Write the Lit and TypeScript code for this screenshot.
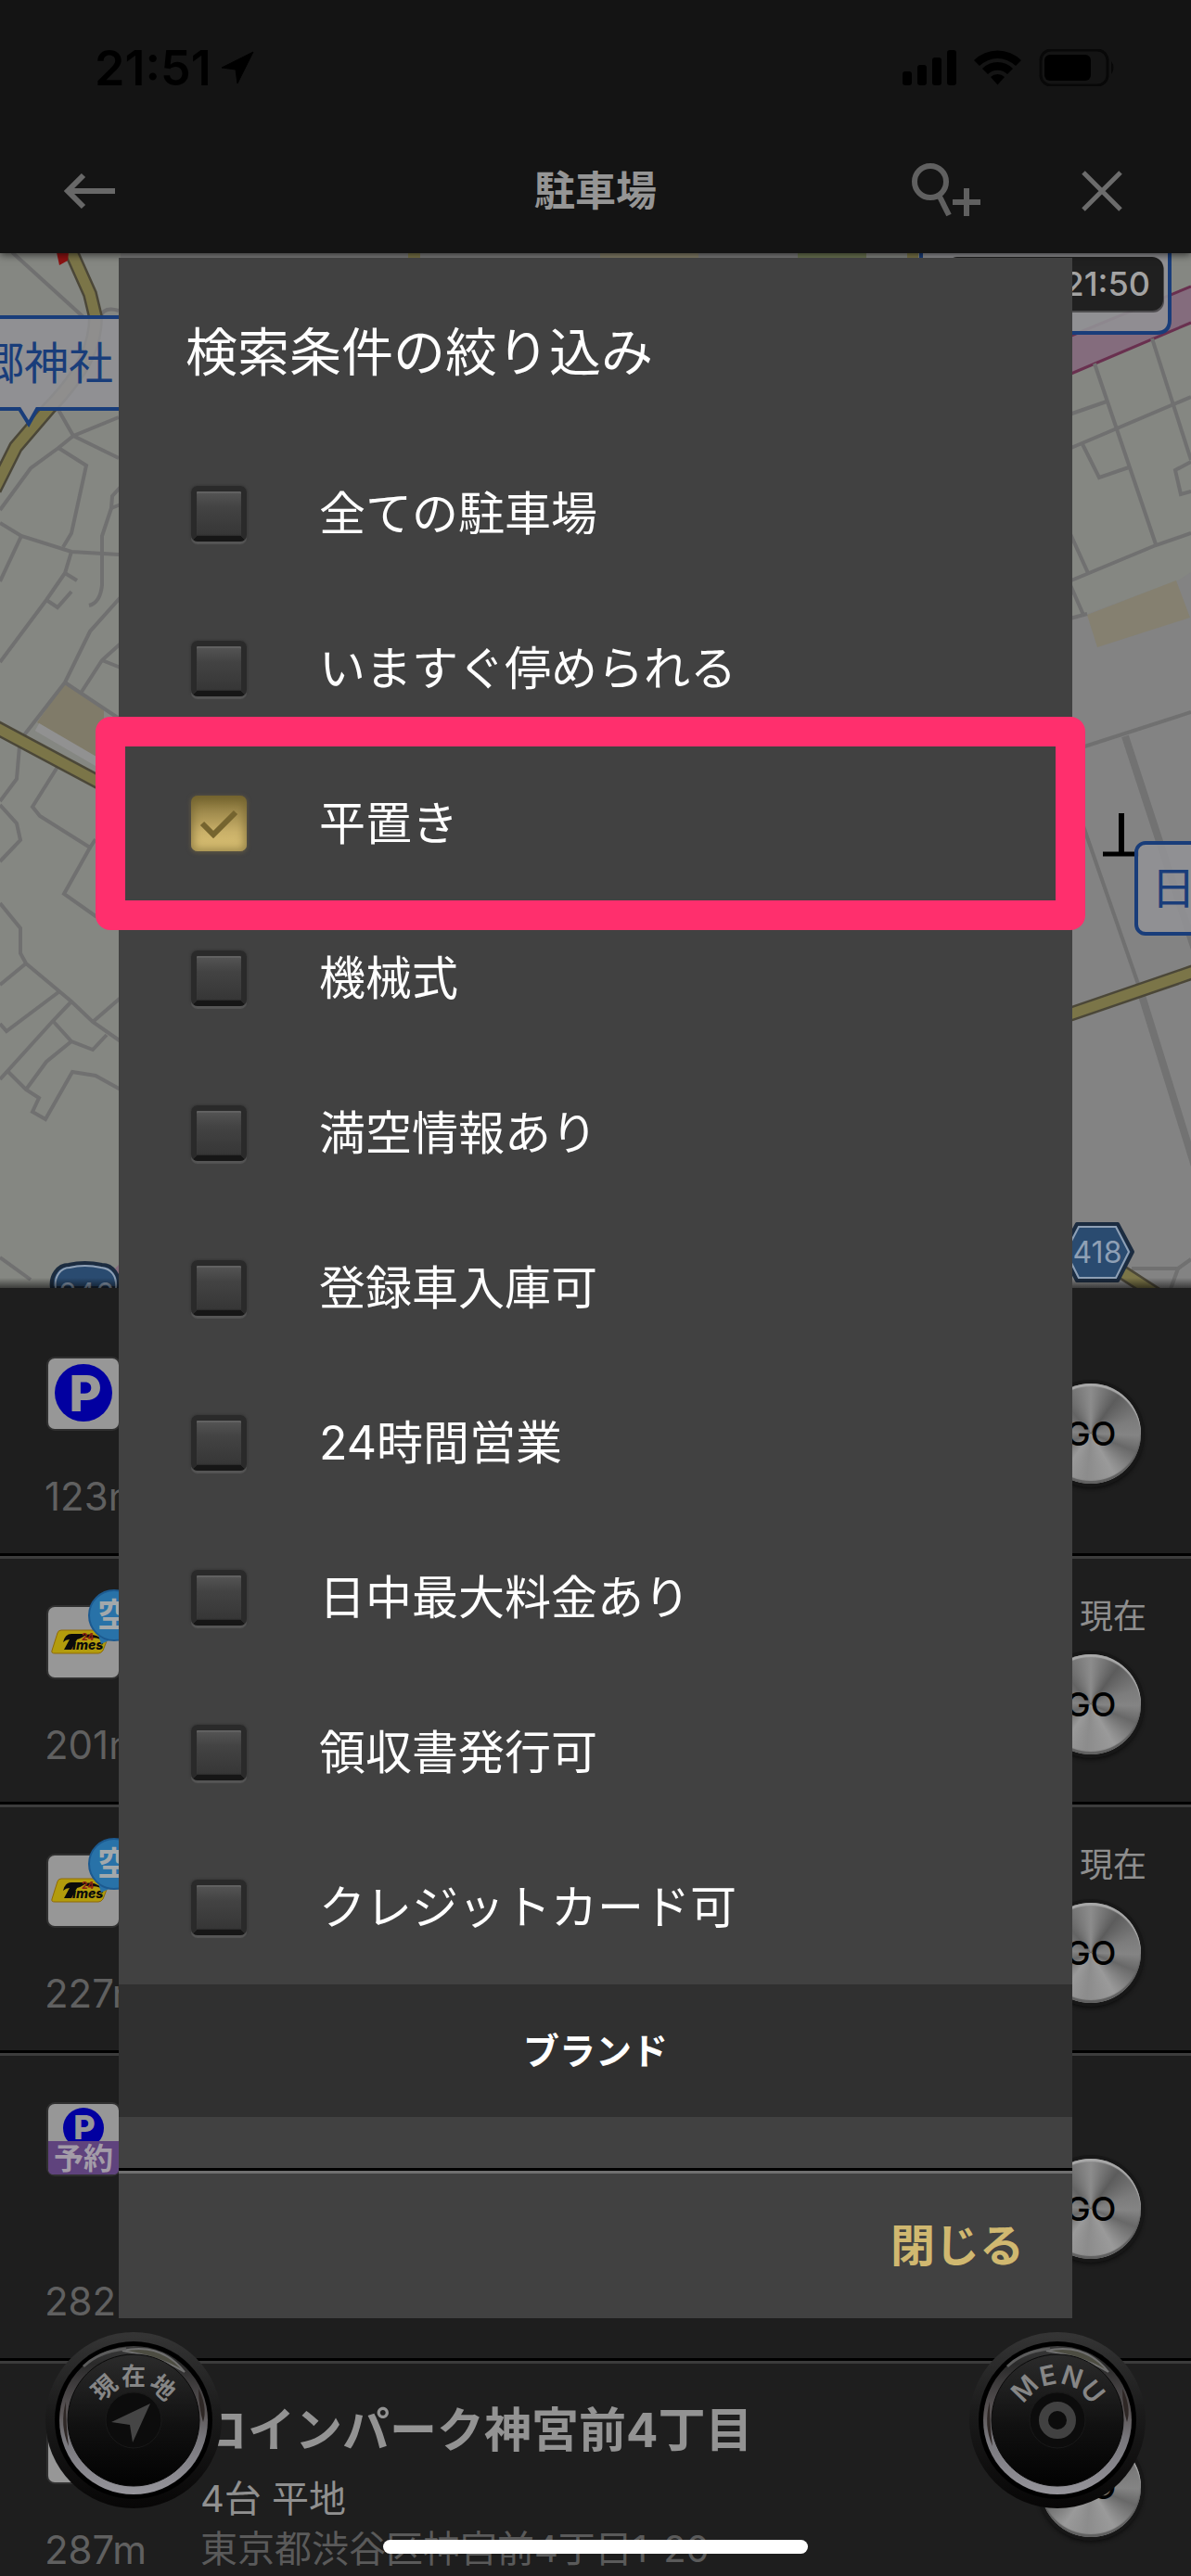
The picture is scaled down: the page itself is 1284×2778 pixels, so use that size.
import { LitElement, html, css, svg, nothing } from "lit";
import { customElement, property, state } from "lit/decorators.js";

type LotKind = "parking" | "times" | "reserve" | "plain";

interface Lot {
  kind: LotKind;
  distance: string;
  vacant?: boolean;
  now?: boolean;
  tall?: boolean;
  name?: string;
  detail?: string;
  address?: string;
}

const LOTS: Lot[] = [
  { kind: "parking", distance: "123m" },
  { kind: "times", distance: "201m", vacant: true, now: true },
  { kind: "times", distance: "227m", vacant: true, now: true },
  { kind: "reserve", distance: "282m", tall: true },
  {
    kind: "plain",
    distance: "287m",
    name: "コインパーク神宮前4丁目",
    detail: "4台 平地",
    address: "東京都渋谷区神宮前4丁目1-20",
  },
];

const FILTERS = [
  "全ての駐車場",
  "いますぐ停められる",
  "平置き",
  "機械式",
  "満空情報あり",
  "登録車入庫可",
  "24時間営業",
  "日中最大料金あり",
  "領収書発行可",
  "クレジットカード可",
];

const fontStack = css`Inter, "Noto Sans CJK JP", sans-serif`;

/** Status bar and navigation bar. */
@customElement("app-header")
export class AppHeader extends LitElement {
  static styles = css`
    :host {
      display: block;
      position: relative;
      z-index: 1;
      background: #141414;
      box-shadow: 0 2px 8px rgba(0, 0, 0, 0.6);
      padding-bottom: 7px;
      font-family: ${fontStack};
    }
    .status {
      display: flex;
      align-items: center;
      justify-content: space-between;
      height: 146px;
      padding: 0 80px 0 102px;
      color: #000;
    }
    .clock {
      display: flex;
      align-items: center;
      gap: 10px;
      font-size: 52px;
      font-weight: 600;
    }
    .nav {
      display: grid;
      grid-template-columns: 1fr auto 1fr;
      align-items: center;
      height: 120px;
      padding: 0 66px;
    }
    h1 {
      margin: 0;
      font-size: 44px;
      font-weight: 700;
      line-height: 60px;
      color: #959595;
    }
    .actions {
      display: flex;
      justify-content: flex-end;
      gap: 104px;
    }
    button {
      display: flex;
      padding: 0;
      border: 0;
      background: none;
      cursor: pointer;
    }
  `;

  render() {
    return html`
      <div class="status">
        <div class="clock">
          <span>21:51</span>
          <svg width="36" height="36" viewBox="0 0 36 36">
            <path d="M35 1 18 35 16 20 1 18Z" fill="#000" stroke="#000" stroke-linejoin="round" />
          </svg>
        </div>
        <svg width="232" height="40" viewBox="0 0 232 40">
          <rect x="1" y="24" width="10" height="15" rx="3" />
          <rect x="17" y="17" width="10" height="22" rx="3" />
          <rect x="33" y="9" width="10" height="30" rx="3" />
          <rect x="49" y="1" width="10" height="38" rx="3" />
          <path
            d="M78 12 A36 36 0 0 1 129 12 L123 18 A28 28 0 0 0 84 18Z M87 21 A23 23 0 0 1 120 21 L114 27 A15 15 0 0 0 93 27Z M96 30 A11 11 0 0 1 111 30 L103.500 38.500Z"
          />
          <rect x="150" y="1" width="72" height="38" rx="11" fill="none" stroke="#080808" stroke-width="3" />
          <rect x="154" y="6" width="50" height="28" rx="6" />
          <path d="M226 13 q5 7 0 14Z" fill="#080808" />
        </svg>
      </div>
      <nav class="nav">
        <button aria-label="戻る">
          <svg width="64" height="44" viewBox="0 0 64 44" fill="none" stroke="#686868" stroke-width="6">
            <path d="M58 22H8M24 5 7 22 24 39" />
          </svg>
        </button>
        <h1>駐車場</h1>
        <div class="actions">
          <button aria-label="条件を追加して検索">
            <svg width="76" height="64" viewBox="0 0 76 64" fill="none" stroke="#606060" stroke-width="6">
              <circle cx="21" cy="22" r="17" />
              <path d="M31 38 41 58" stroke-width="6" />
              <path d="M45 44H75M60 29V59" />
            </svg>
          </button>
          <button aria-label="閉じる">
            <svg width="56" height="64" viewBox="0 0 56 64" fill="none" stroke="#6c6c6c" stroke-width="5">
              <path d="M6 12 46 52M46 12 6 52" />
            </svg>
          </button>
        </div>
      </nav>
    `;
  }
}

const OLIVE_ROADS = [
  "M76 270 97 317 103 342 C103 370 92 400 53 440 L17 482 -6 528",
  "M-5 784 128 855",
];

const LEFT_STREETS = [
  "M13 272 90 342",
  "M108 342 Q112 330 128 335",
  "M63 442 79 470 128 450",
  "M79 470 128 494",
  "M79 470 63 483 33 505 0 550",
  "M63 483 93 502 77 575 68 590",
  "M0 564 23 578 77 595 128 598",
  "M23 578 0 627",
  "M77 595 70 618 50 647 0 714",
  "M70 618 83 626",
  "M50 647 62 655 77 638",
  "M130 525 121 535 120 548 110 578 110 631 Q108 650 96 653",
  "M120 548 130 544",
  "M130 644 97 681 70 736 25 794",
  "M70 736 130 776",
  "M88 746 110 712 130 694",
  "M110 712 130 720",
  "M21 805 18 840 0 864",
  "M0 868 18 888 22 906 0 929",
  "M62 827 35 870 43 880 97 914 103 905",
  "M97 914 69 964 103 988 130 1000",
  "M0 974 22 1001 22 1028 28 1039 77 1080 100 1102 130 1123",
  "M28 1039 0 1062",
  "M63 1070 7 1112 0 1104",
  "M77 1080 57 1101 0 1164",
  "M100 1102 130 1076",
  "M57 1101 77 1123 100 1132 115 1116",
  "M77 1123 50 1145 28 1175",
  "M7 1154 28 1175 42 1184 35 1199 49 1207 78 1156 103 1160 130 1175",
  "M0 1356 33 1380",
];

const RIGHT_STREETS = [
  "M1180 392 1246 587",
  "M1242 365 1284 496",
  "M1150 448 1193 433",
  "M1150 485 1284 428",
  "M1167 479 1185 515 1217 504",
  "M1284 498 1267 507 1273 533 1284 530",
  "M1150 628 1246 588 1284 575",
  "M1150 567 1173 618",
  "M1150 622 1168 663",
  "M1150 668 1172 662",
  "M1160 868 1228 1064",
  "M1220 1368 1270 1368 1284 1358",
  "M1270 1368 1262 1390",
];

/** Street map; drawn in a free coordinate space starting at y = 273. */
@customElement("map-view")
export class MapView extends LitElement {
  static styles = css`
    :host {
      display: block;
      overflow: hidden;
      background: #858782;
    }
    svg {
      display: block;
      width: 100%;
      height: 100%;
      font-family: ${fontStack};
    }
    .street {
      fill: none;
      stroke: #707070;
      stroke-width: 4;
    }
    .wide {
      fill: none;
      stroke: #727272;
      stroke-width: 8;
    }
    .edge {
      fill: none;
      stroke: #4b4738;
      stroke-width: 16;
    }
    .core {
      fill: none;
      stroke: #7b7548;
      stroke-width: 11;
    }
    .callout {
      fill: #919195;
      fill-opacity: 0.9;
      stroke: #193d7a;
      stroke-width: 4;
    }
    .place {
      font-size: 48px;
      fill: #193d7a;
    }
    .route {
      font-size: 32px;
      fill: #8fa0b5;
      text-anchor: middle;
    }
    .time {
      font-size: 36px;
      font-weight: 500;
      fill: #a3a3a3;
      text-anchor: end;
    }
  `;

  render() {
    return html`
      <svg viewBox="0 273 1284 1116" preserveAspectRatio="xMidYMid slice">
        <defs>
          <linearGradient id="fade" x1="0" y1="0" x2="0" y2="1">
            <stop offset="0" stop-color="#000" stop-opacity="0" />
            <stop offset="1" stop-color="#000" stop-opacity=".6" />
          </linearGradient>
        </defs>
        <path d="M1150 670 1172 662 1270 626 1284 617V1400H1150Z" fill="#838383" />
        <path d="M130 273H860V282H130Z" fill="#7c7c7c" />
        <path d="M647 273H753V282H647Z" fill="#86806a" />
        <path d="M860 273H934V282H860Z" fill="#6c7552" />
        <path d="M440 273H453V282H440Z M978 273H990V282H978Z" fill="#7b7548" />
        <path d="M70 736 112 764 112 822 40 779Z" fill="#807b69" />
        <path d="M40 784 112 826" stroke="#919191" stroke-width="9" />
        <path d="M1172 663 1268 626 1283 666 1183 698Z" fill="#858070" />
        <path d="M1150 364 1284 309V348L1150 405Z" fill="#846c7d" />
        <path d="M1150 364 1284 309M1284 348 1150 405" stroke="#69304f" stroke-width="3" />
        ${LEFT_STREETS.map((d) => svg`<path class="street" d=${d} />`)}
        ${RIGHT_STREETS.map((d) => svg`<path class="street" d=${d} />`)}
        <path class="street" d="M1160 808 1284 768" />
        <path class="wide" d="M1213 794 1290 1030M1228 1064 1290 1264" />
        ${OLIVE_ROADS.map((d) => svg`<path class="edge" d=${d} /><path class="core" d=${d} />`)}
        <path class="edge" d="M1150 1095 1290 1047M1210 1372 1250 1398" />
        <path class="core" d="M1150 1095 1290 1047M1210 1372 1250 1398" />
        <path d="M61 272 74 272 73 281 64 286Z" fill="#8c1212" />

        <path class="callout" d="M-10 342H140V441H40L31 457 21 441H-10Z" />
        <text class="place" x="-22" y="409">郷神社</text>

        <path class="callout" d="M993 260H1261V345Q1261 359 1247 359H993Z" />
        <rect x="1020" y="279" width="235" height="58" rx="12" fill="#0c0c0c" opacity=".5" />
        <rect x="1020" y="277" width="234" height="58" rx="12" fill="#202020" />
        <text class="time" x="1240" y="319">21:50</text>

        <path d="M1209 877V921" stroke="#000" stroke-width="6" />
        <path d="M1189 921H1228" stroke="#000" stroke-width="5" />
        <rect class="callout" x="1225" y="909" width="90" height="98" rx="10" />
        <text class="place" x="1241" y="975">日</text>

        <path d="M116 1376 130 1362V1384Z" fill="#846c7d" />
        <path
          d="M56 1389 C54 1376 62 1364 74 1364 Q91 1360 110 1364 C122 1364 130 1376 128 1389Z"
          fill="#2a4b70" stroke="#1c2c40" stroke-width="4"
        />
        <path
          d="M60 1389 C58 1376 66 1367 75 1367 Q91 1363 109 1367 C120 1368 126 1376 125 1389"
          fill="none" stroke="#8fa0b5" stroke-width="2"
        />
        <text class="route" x="93" y="1407">246</text>

        <path
          d="M1145 1350 1161 1320H1205L1221 1350 1205 1381H1161Z"
          fill="#2a4b70" stroke="#1c2c40" stroke-width="4" stroke-linejoin="round"
        />
        <path d="M1149 1350 1163 1323H1203L1217 1350 1203 1378H1163Z" fill="none" stroke="#8fa0b5" stroke-width="2" />
        <text class="route" x="1183" y="1362">418</text>
        <rect x="0" y="1378" width="1284" height="12" fill="url(#fade)" />
      </svg>
    `;
  }
}

/** One parking lot in the result list. */
@customElement("lot-row")
export class LotRow extends LitElement {
  @property({ attribute: false }) lot!: Lot;

  static styles = css`
    :host {
      display: block;
      flex: none;
      font-family: ${fontStack};
    }
    .row {
      display: grid;
      grid-template-columns: 164px 1fr auto;
      box-sizing: border-box;
      height: 268px;
      padding: 0 48px 0 52px;
      border-bottom: 3px solid #3c3c3c;
      box-shadow: inset 0 -3px 0 #000;
    }
    .tall {
      height: 332px;
    }
    .side {
      display: flex;
      flex-direction: column;
      justify-content: space-between;
      padding: 52px 0 40px;
      margin-left: -4px;
    }
    .tile {
      width: 76px;
      height: 76px;
      margin-left: 4px;
    }
    .tile svg {
      display: block;
      overflow: visible;
    }
    .p {
      font-weight: 800;
      text-anchor: middle;
      fill: #989898;
    }
    .times {
      font-size: 14px;
      font-weight: 800;
      font-style: italic;
      fill: #0b0b0b;
    }
    .small {
      font-size: 10px;
      font-weight: 800;
      fill: #8c2414;
    }
    .vacant {
      font-size: 36px;
      font-weight: 700;
      fill: #a2a8ab;
      text-anchor: middle;
    }
    .reserve {
      font-size: 32px;
      font-weight: 700;
      fill: #a39ca8;
      text-anchor: middle;
    }
    .distance {
      font-size: 42px;
      line-height: 48px;
      color: #606060;
    }
    .info {
      display: flex;
      flex-direction: column;
      padding-top: 40px;
      white-space: nowrap;
    }
    .name {
      margin: 0;
      font-size: 51px;
      font-weight: 700;
      line-height: 64px;
      color: #939393;
    }
    .detail,
    .address {
      margin: 0;
      font-size: 40px;
      line-height: 54px;
      color: #909090;
    }
    .detail {
      padding-top: 15px;
    }
    .address {
      color: #5a5a5a;
    }
    .end {
      display: flex;
      flex-direction: column;
      align-items: flex-end;
      justify-content: center;
      gap: 17px;
    }
    .now {
      font-size: 36px;
      line-height: 48px;
      color: #8e8e8e;
      margin-top: -16px;
    }
    .go {
      width: 108px;
      height: 108px;
      margin-right: 6px;
      padding: 0;
      border: 0;
      border-radius: 50%;
      font-family: inherit;
      font-size: 36px;
      font-weight: 500;
      color: #000;
      background: conic-gradient(
        #8c8c8c 0deg, #5c5c5c 36deg, #7c7c7c 72deg, #848484 92deg, #686868 112deg,
        #9a9a9a 150deg, #8c8c8c 185deg, #9a9a9a 215deg, #686868 250deg,
        #848484 275deg, #646464 320deg, #8c8c8c 360deg
      );
      box-shadow:
        inset 0 3px 1px #a8a8a8, inset 0 -3px 1px #606060,
        0 0 0 4px #171717, 0 3px 5px 2px #0a0a0a;
      cursor: pointer;
    }
  `;

  private tile(kind: LotKind) {
    switch (kind) {
      case "parking":
        return svg`
          <circle cx="38" cy="37" r="31" fill="#0200a0" />
          <text class="p" x="40" y="57" font-size="54">P</text>`;
      case "times":
        return svg`
          <path
            d="M14 25H63Q67 25 66 29L59 47Q57 50 54 50H7Q3 50 4 47L10 28Q11 25 14 25Z"
            fill="#b39c0c" stroke="#8f6a08" stroke-width="1"
          />
          <path d="M16 38 Q18 29 25 29H42Q36 34 31 35L25 46H17L23 35Q19 35 16 38Z" fill="#0b0b0b" />
          <path d="M40 30 Q50 28 60 36 Q50 32 40 33Z" fill="#0b0b0b" />
          <text class="times" x="26" y="46">imes</text>
          <text class="small" x="36" y="36">24</text>`;
      case "reserve":
        return svg`
          <circle cx="38" cy="26" r="22" fill="#0200a0" />
          <text class="p" x="39" y="38" font-size="36">P</text>
          <path d="M0 40H76V70Q76 76 70 76H6Q0 76 0 70Z" fill="#5f437d" />
          <text class="reserve" x="38" y="70">予約</text>`;
      default:
        return nothing;
    }
  }

  render() {
    const { kind, distance, vacant, now, tall, name, detail, address } = this.lot;
    return html`
      <article class="row ${tall ? "tall" : ""}">
        <div class="side">
          <div class="tile">
            <svg width="76" height="76" viewBox="0 0 76 76">
              <rect x="-2" y="-2" width="80" height="80" rx="9" fill="#303030" />
              <rect width="76" height="76" rx="7" fill="#979797" />
              ${this.tile(kind)}
              ${vacant
                ? svg`
                  <path d="M54 30 57 40 70 34Z" fill="#2872a8" />
                  <circle cx="71" cy="9" r="27" fill="#2872a8" stroke="#1c5a90" stroke-width="2" />
                  <text class="vacant" x="71" y="22">空</text>`
                : nothing}
            </svg>
          </div>
          <span class="distance">${distance}</span>
        </div>
        <div class="info">
          ${name ? html`<h3 class="name">${name}</h3>` : nothing}
          ${detail ? html`<p class="detail">${detail}</p>` : nothing}
          ${address ? html`<p class="address">${address}</p>` : nothing}
        </div>
        <div class="end">
          ${now ? html`<span class="now">現在</span>` : nothing}
          <button class="go">GO</button>
        </div>
      </article>
    `;
  }
}

/** Round chrome-rimmed button with a caption set along its upper edge. */
@customElement("dial-button")
export class DialButton extends LitElement {
  @property() caption = "";
  @property({ attribute: false }) angles: number[] = [];
  @property() icon: "locate" | "menu" = "menu";

  static styles = css`
    :host {
      display: block;
    }
    button {
      display: block;
      padding: 0;
      border: 0;
      border-radius: 50%;
      background: none;
      cursor: pointer;
    }
    svg {
      display: block;
      overflow: visible;
      font-family: ${fontStack};
    }
    text {
      font-size: 29px;
      font-weight: 600;
      fill: #868686;
      text-anchor: middle;
    }
    .cjk {
      font-weight: 700;
      font-size: 26px;
    }
  `;

  render() {
    const cjk = this.icon === "locate";
    return html`
      <button aria-label=${this.caption}>
        <svg width="192" height="192" viewBox="-96 -96 192 192">
          <defs>
            <linearGradient id="bezel" x1="0" y1="0" x2="0" y2="1">
              <stop offset="0" stop-color="#353535" />
              <stop offset=".45" stop-color="#1b1b1b" />
              <stop offset="1" stop-color="#070606" />
            </linearGradient>
            <linearGradient id="rim" x1="0" y1="0" x2="0" y2="1">
              <stop offset="0" stop-color="#3a3a3a" />
              <stop offset=".12" stop-color="#2a2a2a" />
              <stop offset=".3" stop-color="#454243" />
              <stop offset=".45" stop-color="#5b5657" />
              <stop offset=".62" stop-color="#77767b" />
              <stop offset=".8" stop-color="#85848a" />
              <stop offset="1" stop-color="#96959b" />
            </linearGradient>
            <linearGradient id="face" x1="0" y1="0" x2="0" y2="1">
              <stop offset="0" stop-color="#2b2b2b" />
              <stop offset=".55" stop-color="#101010" />
              <stop offset="1" stop-color="#020202" />
            </linearGradient>
          </defs>
          <circle r="95" fill="url(#bezel)" />
          <circle r="85" fill="#000" />
          <circle r="80" fill="url(#rim)" />
          <path d="M-12 -75 Q30 -84 55 -52 Q30 -68 -12 -75Z" fill="#4d4d42" stroke="#6f6f6f" stroke-width="2" />
          <path d="M-54 -58 Q-36 -75 -8 -77" fill="none" stroke="#5c5c5c" stroke-width="3" />
          <path d="M70 -34 Q80 -14 75 2 Q70 -14 70 -34Z" fill="#2e2725" />
          <path d="M-73 -20 Q-80 5 -70 28 Q-73 5 -73 -20Z" fill="#2e2725" />
          <circle r="71" fill="url(#face)" stroke="#0a0a0a" />
          <circle r="30" fill="#0c0c0c" stroke="#191919" />
          ${this.icon === "menu"
            ? svg`<circle r="15" fill="none" stroke="#414141" stroke-width="10" />`
            : svg`<path d="M18 -18 -24 2 -4 5 -1 24Z" fill="#454545" />`}
          ${[...this.caption].map(
            (ch, i) => svg`
              <text class=${cjk ? "cjk" : ""} y=${cjk ? -38 : -39} transform="rotate(${this.angles[i]})">${ch}</text>`,
          )}
        </svg>
      </button>
    `;
  }
}

/** Modal with the search filters. */
@customElement("filter-dialog")
export class FilterDialog extends LitElement {
  @state() private selected = new Set<string>(["平置き"]);

  static styles = css`
    :host {
      display: flex;
      flex-direction: column;
      background: #414141;
      color: #fff;
      font-family: ${fontStack};
    }
    h2 {
      margin: 0;
      padding: 62px 72px 50px;
      font-size: 56px;
      font-weight: 400;
      line-height: 80px;
    }
    .body {
      flex: 1;
      min-height: 0;
    }
    .option {
      position: relative;
      display: flex;
      align-items: center;
      gap: 78px;
      height: 167px;
      padding: 0 78px;
      font-size: 50px;
      font-weight: 400;
      cursor: pointer;
    }
    .name {
      padding-bottom: 8px;
    }
    .box {
      display: grid;
      width: 60px;
      height: 60px;
    }
    .box > * {
      grid-area: 1 / 1;
    }
    input {
      appearance: none;
      box-sizing: border-box;
      width: 60px;
      height: 60px;
      margin: 0;
      border: 6px solid #2a2a2a;
      border-radius: 7px;
      background: linear-gradient(#555, #434343 35%, #363636) padding-box;
      box-shadow:
        inset 0 2px 1px #626262, inset 0 -1px 1px #2c2c2c,
        0 3px 1px #555, 0 0 2px 1px #383838;
      border-bottom-color: #161616;
    }
    input:checked {
      border: 0;
      background: linear-gradient(#75652f, #a08b4d 30%, #c9b069 65%, #dcc274);
      box-shadow: inset 0 0 8px 3px #6f602f99, 0 1px 4px 1px #5c5543;
    }
    .check {
      pointer-events: none;
      z-index: 1;
    }
    .highlight::after {
      content: "";
      position: absolute;
      inset: -31px -14px -32px -25px;
      border: 32px solid #ff2f6d;
      border-radius: 16px;
      pointer-events: none;
      z-index: 2;
    }
    .section {
      margin: 0;
      padding: 41px 0;
      background: #303030;
      font-size: 39px;
      font-weight: 700;
      line-height: 61px;
      text-align: center;
    }
    .footer {
      display: flex;
      justify-content: flex-end;
      align-items: center;
      height: 156px;
      padding: 0 52px;
      border-top: 3px solid #707070;
      box-shadow: 0 -3px 0 #000;
    }
    .close {
      padding: 0;
      border: 0;
      background: none;
      font-family: inherit;
      font-size: 48px;
      font-weight: 700;
      line-height: 72px;
      color: #d0b870;
      cursor: pointer;
    }
  `;

  private toggle(name: string) {
    const next = new Set(this.selected);
    if (!next.delete(name)) next.add(name);
    this.selected = next;
  }

  render() {
    return html`
      <h2>検索条件の絞り込み</h2>
      <div class="body">
        ${FILTERS.map((name) => {
          const on = this.selected.has(name);
          return html`
            <label class="option ${name === "平置き" ? "highlight" : ""}">
              <span class="box">
                <input type="checkbox" .checked=${on} @change=${() => this.toggle(name)} />
                ${on
                  ? html`<svg class="check" width="60" height="60" viewBox="0 0 60 60">
                      <path d="M12 30 24 42 48 18" fill="none" stroke="#75642f" stroke-width="6" />
                    </svg>`
                  : nothing}
              </span>
              <span class="name">${name}</span>
            </label>
          `;
        })}
        <h3 class="section">ブランド</h3>
      </div>
      <div class="footer">
        <button class="close">閉じる</button>
      </div>
    `;
  }
}

@customElement("app-root")
export class AppRoot extends LitElement {
  static styles = css`
    :host {
      position: relative;
      display: flex;
      flex-direction: column;
      height: 100vh;
      overflow: hidden;
      background: #1e1e1e;
    }
    map-view {
      flex: 1;
      min-height: 0;
    }
    .results {
      display: flex;
      flex-direction: column;
      box-sizing: border-box;
      flex: 0 0 50vh;
      padding-top: 24px;
      overflow: hidden;
    }
    filter-dialog {
      position: absolute;
      inset: 278px 128px;
      z-index: 2;
    }
    .dial {
      position: absolute;
      bottom: 72px;
      z-index: 1;
    }
    .left {
      left: 48px;
    }
    .right {
      right: 48px;
    }
    .home {
      position: absolute;
      left: 50%;
      bottom: 24px;
      width: 458px;
      height: 15px;
      margin-left: -229px;
      border-radius: 8px;
      background: #fff;
      z-index: 3;
    }
  `;

  render() {
    return html`
      <app-header></app-header>
      <map-view></map-view>
      <section class="results">
        ${LOTS.map((lot) => html`<lot-row .lot=${lot}></lot-row>`)}
      </section>
      <dial-button class="dial left" caption="現在地" icon="locate" .angles=${[-42, 0, 42]}></dial-button>
      <dial-button class="dial right" caption="MENU" icon="menu" .angles=${[-46, -12, 19, 51]}></dial-button>
      <filter-dialog role="dialog"></filter-dialog>
      <div class="home"></div>
    `;
  }
}
